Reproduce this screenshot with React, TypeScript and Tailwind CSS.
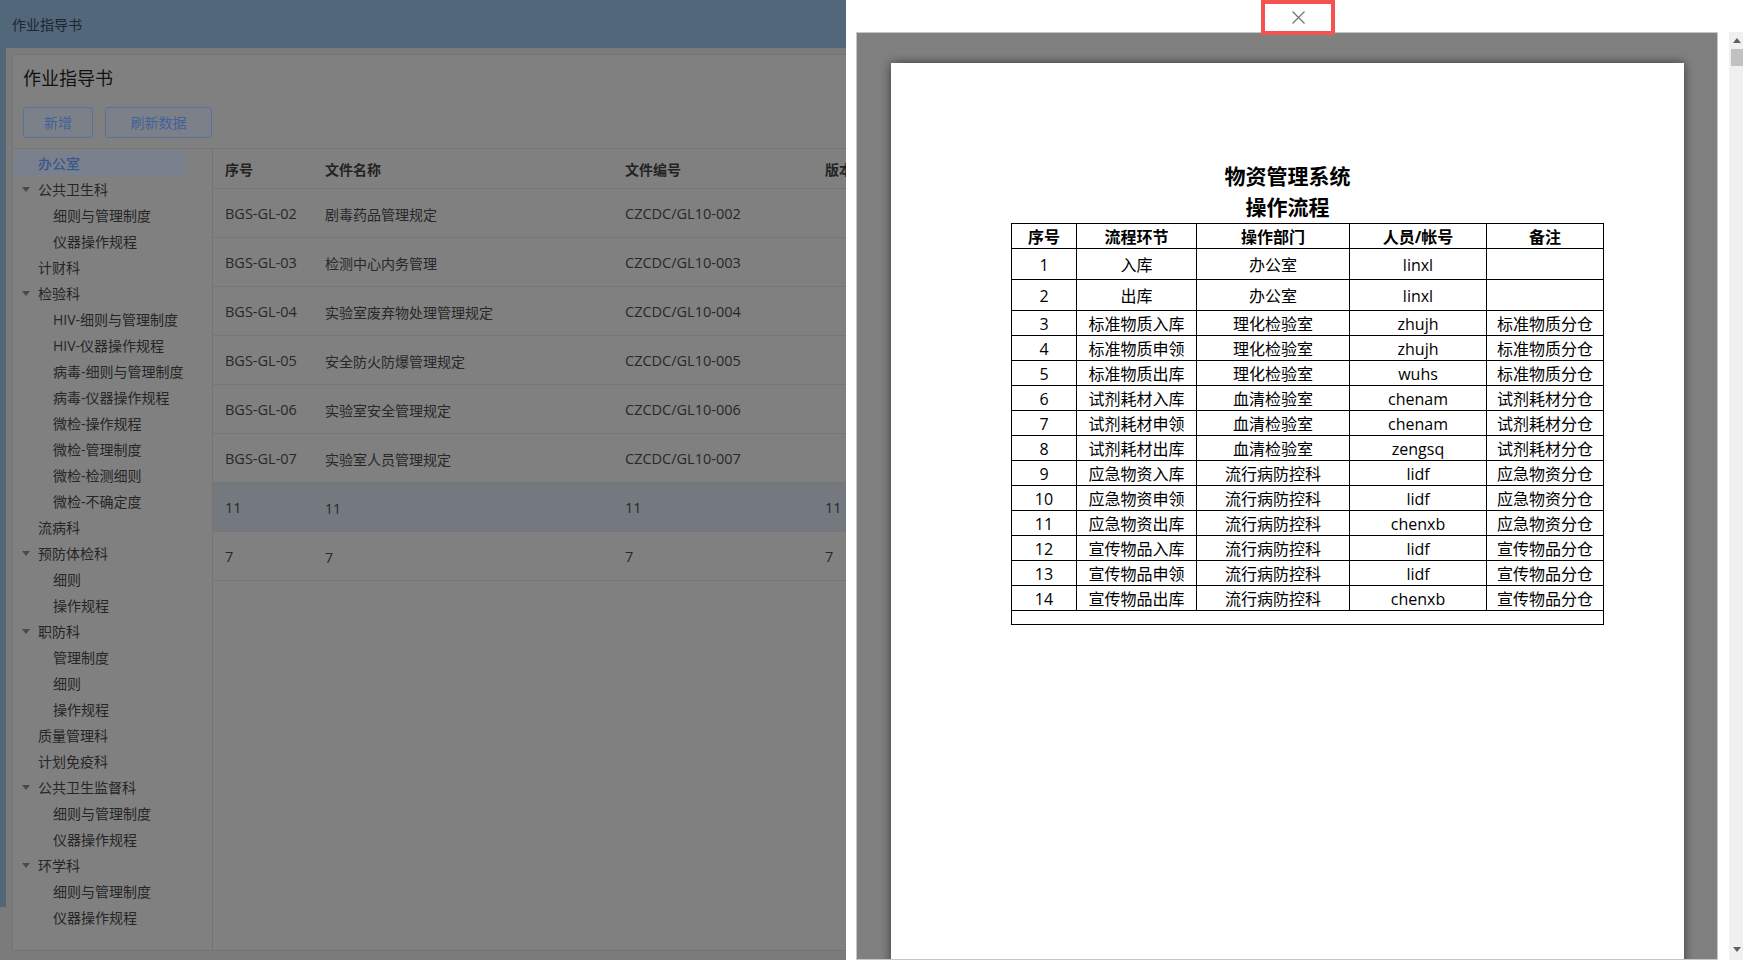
import React from 'react'

interface TreeNode {
  label: string
  level: 0 | 1
  expandable?: boolean
  selected?: boolean
}

const tree_nodes: TreeNode[] = [
  { label: '办公室', level: 0, selected: true },
  { label: '公共卫生科', level: 0, expandable: true },
  { label: '细则与管理制度', level: 1 },
  { label: '仪器操作规程', level: 1 },
  { label: '计财科', level: 0 },
  { label: '检验科', level: 0, expandable: true },
  { label: 'HIV-细则与管理制度', level: 1 },
  { label: 'HIV-仪器操作规程', level: 1 },
  { label: '病毒-细则与管理制度', level: 1 },
  { label: '病毒-仪器操作规程', level: 1 },
  { label: '微检-操作规程', level: 1 },
  { label: '微检-管理制度', level: 1 },
  { label: '微检-检测细则', level: 1 },
  { label: '微检-不确定度', level: 1 },
  { label: '流病科', level: 0 },
  { label: '预防体检科', level: 0, expandable: true },
  { label: '细则', level: 1 },
  { label: '操作规程', level: 1 },
  { label: '职防科', level: 0, expandable: true },
  { label: '管理制度', level: 1 },
  { label: '细则', level: 1 },
  { label: '操作规程', level: 1 },
  { label: '质量管理科', level: 0 },
  { label: '计划免疫科', level: 0 },
  { label: '公共卫生监督科', level: 0, expandable: true },
  { label: '细则与管理制度', level: 1 },
  { label: '仪器操作规程', level: 1 },
  { label: '环学科', level: 0, expandable: true },
  { label: '细则与管理制度', level: 1 },
  { label: '仪器操作规程', level: 1 }
]

const doc_rows = [
  { code: 'BGS-GL-02', name: '剧毒药品管理规定', number: 'CZCDC/GL10-002', version: '' },
  { code: 'BGS-GL-03', name: '检测中心内务管理', number: 'CZCDC/GL10-003', version: '' },
  { code: 'BGS-GL-04', name: '实验室废弃物处理管理规定', number: 'CZCDC/GL10-004', version: '' },
  { code: 'BGS-GL-05', name: '安全防火防爆管理规定', number: 'CZCDC/GL10-005', version: '' },
  { code: 'BGS-GL-06', name: '实验室安全管理规定', number: 'CZCDC/GL10-006', version: '' },
  { code: 'BGS-GL-07', name: '实验室人员管理规定', number: 'CZCDC/GL10-007', version: '' },
  { code: '11', name: '11', number: '11', version: '11', selected: true },
  { code: '7', name: '7', number: '7', version: '7' }
]

// rows of the document preview: 序号, 流程环节, 操作部门, 人员/帐号, 备注
const flow_rows = [
  ['1', '入库', '办公室', 'linxl', ''],
  ['2', '出库', '办公室', 'linxl', ''],
  ['3', '标准物质入库', '理化检验室', 'zhujh', '标准物质分仓'],
  ['4', '标准物质申领', '理化检验室', 'zhujh', '标准物质分仓'],
  ['5', '标准物质出库', '理化检验室', 'wuhs', '标准物质分仓'],
  ['6', '试剂耗材入库', '血清检验室', 'chenam', '试剂耗材分仓'],
  ['7', '试剂耗材申领', '血清检验室', 'chenam', '试剂耗材分仓'],
  ['8', '试剂耗材出库', '血清检验室', 'zengsq', '试剂耗材分仓'],
  ['9', '应急物资入库', '流行病防控科', 'lidf', '应急物资分仓'],
  ['10', '应急物资申领', '流行病防控科', 'lidf', '应急物资分仓'],
  ['11', '应急物资出库', '流行病防控科', 'chenxb', '应急物资分仓'],
  ['12', '宣传物品入库', '流行病防控科', 'lidf', '宣传物品分仓'],
  ['13', '宣传物品申领', '流行病防控科', 'lidf', '宣传物品分仓'],
  ['14', '宣传物品出库', '流行病防控科', 'chenxb', '宣传物品分仓']
]

const ui_font = "font-['Open_Sans','Noto_Sans_CJK_SC',sans-serif]"

const Caret = () => (
  <svg width="8" height="5" viewBox="0 0 8 5" className="shrink-0">
    <path d="M0 0 L8 0 L4 5 Z" fill="#4a4a4a" />
  </svg>
)

const DocTree = () => (
  <div className="w-[200px] shrink-0 border-r border-[#747474] pt-px">
    {tree_nodes.map((node, i) => (
      <div
        key={i}
        className={`flex h-[26px] items-center text-[14px] ${
          node.selected ? 'w-[172px] bg-[#7a818d] font-medium text-[#38568f]' : 'text-[#262626]'
        }`}
      >
        <div className="flex w-[25px] shrink-0 items-center justify-end pr-[8px]">
          {node.expandable && <Caret />}
        </div>
        <span className={node.level === 1 ? 'pl-[15px]' : ''}>{node.label}</span>
      </div>
    ))}
  </div>
)

const DocTable = () => (
  <div className="w-[800px] shrink-0">
    {/* header */}
    <div className="flex h-[40px] items-center border-b border-[#767676] pl-[12px] pt-[2px] text-[14px] font-bold text-[#232323]">
      <div className="w-[100px]">序号</div>
      <div className="w-[300px]">文件名称</div>
      <div className="w-[200px]">文件编号</div>
      <div className="w-[100px]">版本</div>
    </div>
    {doc_rows.map((row, i) => (
      <div
        key={i}
        className={`flex h-[49px] items-center border-b border-[#767676] pl-[12px] pt-[2px] text-[14.5px] text-[#282828] ${
          row.selected ? 'bg-[#74797f]' : ''
        }`}
      >
        <div className="w-[100px]">{row.code}</div>
        <div className="w-[300px] text-[14px]">{row.name}</div>
        <div className="w-[200px]">{row.number}</div>
        <div className="w-[100px]">{row.version}</div>
      </div>
    ))}
  </div>
)

const BackgroundPage = () => (
  <div className={`flex h-full w-[846px] shrink-0 flex-col overflow-hidden bg-[#7b7b7b] ${ui_font}`}>
    {/* title bar */}
    <div className="flex h-[48px] shrink-0 items-center bg-[#52677a] pl-[12px] text-[14px] text-[#1b2630]">
      作业指导书
    </div>
    <div className="flex items-start">
      <div className="h-[859px] w-[6px] shrink-0 bg-[#52677a]" />
      {/* main panel */}
      <div className="ml-[6px] mt-[6px] flex h-[897px] w-[1000px] shrink-0 flex-col border border-[#747474] bg-[#808080]">
        <div className="border-b border-[#767676] px-[10px] pb-[10px] pt-[10px]">
          <h1 className="text-[18px] leading-[26px] text-[#111]">作业指导书</h1>
          <div className="mt-[16px] flex gap-[12px]">
            <button className="h-[31px] w-[70px] rounded-[3px] border border-[#5c7197] bg-[#7c8088] text-[14px] text-[#44619c]">
              新增
            </button>
            <button className="h-[31px] w-[107px] rounded-[3px] border border-[#5c7197] bg-[#7c8088] text-[14px] text-[#44619c]">
              刷新数据
            </button>
          </div>
        </div>
        <div className="flex flex-1">
          <DocTree />
          <DocTable />
        </div>
      </div>
    </div>
  </div>
)

const PreviewPage = () => (
  <div className="h-[1100px] w-[793px] shrink-0 bg-white pt-[98px] text-black shadow-[0_0_10px_rgba(0,0,0,0.55)]">
    <div className="text-center text-[21px] font-bold leading-[31px]">
      <div>物资管理系统</div>
      <div>操作流程</div>
    </div>
    <table className="ml-[120px] w-[592px] table-fixed border-collapse border border-black text-center text-[16px] leading-[20px]">
      <colgroup>
        <col className="w-[65px]" />
        <col className="w-[120px]" />
        <col className="w-[153px]" />
        <col className="w-[137px]" />
        <col className="w-[117px]" />
      </colgroup>
      <thead>
        <tr className="h-[25px] font-bold">
          {['序号', '流程环节', '操作部门', '人员/帐号', '备注'].map(h => (
            <th key={h} className="border border-black p-0 pt-px">{h}</th>
          ))}
        </tr>
      </thead>
      <tbody>
        {flow_rows.map((row, i) => (
          <tr key={i} className={i < 2 ? 'h-[31px]' : 'h-[25px]'}>
            {row.map((cell, j) => (
              <td key={j} className="border border-black p-0 pt-px">{cell}</td>
            ))}
          </tr>
        ))}
        <tr className="h-[14px]">
          <td colSpan={5} className="border border-black p-0" />
        </tr>
      </tbody>
    </table>
  </div>
)

const PreviewDrawer = () => (
  <div className={`relative h-full flex-1 bg-white ${ui_font}`}>
    {/* close button, highlighted */}
    <button className="absolute left-[415px] top-0 z-10 flex h-[35px] w-[74px] items-center justify-center border-[4px] border-[#f55252] bg-white">
      <svg width="13" height="13" viewBox="0 0 13 13">
        <path d="M0.5 0.5 L12.5 12.5 M12.5 0.5 L0.5 12.5" stroke="#767676" strokeWidth="1.3" />
      </svg>
    </button>
    <div className="flex pt-[32px]">
      {/* pdf viewer */}
      <div className="ml-[10px] h-[928px] w-[862px] shrink-0 overflow-hidden border border-[#c6c6c6] bg-[#808080] pl-[34px] pt-[30px]">
        <PreviewPage />
      </div>
      {/* scrollbar */}
      <div className="ml-[11px] flex h-[928px] w-[14px] shrink-0 flex-col bg-[#f0f0f0]">
        <div className="flex h-[17px] items-center justify-center pl-[2px]">
          <svg width="8" height="5" viewBox="0 0 8 5">
            <path d="M0 5 L8 5 L4 0 Z" fill="#606060" />
          </svg>
        </div>
        <div className="ml-[2px] h-[17px] bg-[#c1c1c1]" />
        <div className="flex-1" />
        <div className="flex h-[17px] items-center justify-center pb-[4px] pl-[2px]">
          <svg width="8" height="5" viewBox="0 0 8 5">
            <path d="M0 0 L8 0 L4 5 Z" fill="#606060" />
          </svg>
        </div>
      </div>
    </div>
  </div>
)

export default function App() {
  return (
    <div className="flex h-[960px] w-[1743px] overflow-hidden">
      <BackgroundPage />
      <PreviewDrawer />
    </div>
  )
}
